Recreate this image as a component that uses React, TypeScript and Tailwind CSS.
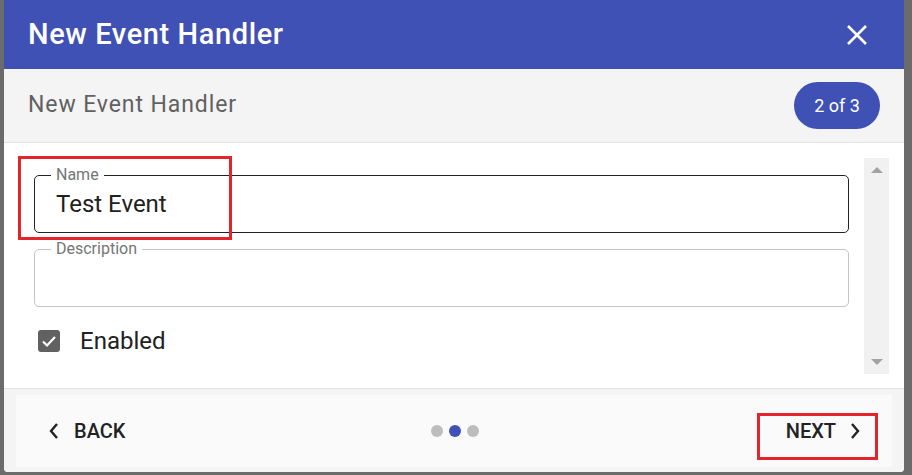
import React from "react";

const ChevronLeft = () => (
  <svg width="12" height="18" viewBox="0 0 12 18" fill="none">
    <path d="M9 2L3 9l6 7" stroke="#222" strokeWidth="2.4" />
  </svg>
);

const ChevronRight = () => (
  <svg width="12" height="18" viewBox="0 0 12 18" fill="none">
    <path d="M3 2l6 7-6 7" stroke="#222" strokeWidth="2.4" />
  </svg>
);

const OutlinedField: React.FC<{ label: string; value?: string; focused?: boolean }> = ({
  label,
  value,
  focused,
}) => (
  <div
    className={
      "relative h-[58px] rounded-[5px] border " + (focused ? "border-[#222]" : "border-[#c4c4c4]")
    }
  >
    <span className="absolute left-[16px] -top-[11px] px-[5px] bg-white text-[16px] leading-[20px] text-[#757575]">
      {label}
    </span>
    {value && (
      <div className="pl-[21px] pt-[13px] text-[24px] leading-[30px] text-[#212121]">{value}</div>
    )}
  </div>
);

const App: React.FC = () => {
  return (
    <div
      className="w-[912px] h-[475px] bg-[#6b6b6b] pl-[4px] pr-[8px] pb-[3px] overflow-hidden"
      style={{ fontFamily: "Roboto, 'Liberation Sans', sans-serif" }}
    >
      <div className="relative h-full flex flex-col bg-white rounded-b-[4px] overflow-hidden">
        {/* title bar */}
        <div className="h-[69px] shrink-0 bg-[#3f51b5] flex items-center justify-between pl-[24px] pr-[36px]">
          <h1 className="text-white text-[29px] font-medium tracking-[0.6px]">New Event Handler</h1>
          <svg width="22" height="22" viewBox="0 0 22 22">
            <path d="M2 2l18 18M20 2L2 20" stroke="white" strokeWidth="2.6" />
          </svg>
        </div>

        {/* step header */}
        <div className="h-[74px] shrink-0 bg-[#f4f4f4] border-b border-[#e2e2e2] flex items-center justify-between pl-[24px] pr-[24px]">
          <span className="text-[#616161] text-[23px] tracking-[0.9px]">New Event Handler</span>
          <span className="h-[47px] w-[86px] rounded-full bg-[#3f51b5] text-white text-[18px] flex items-center justify-center">
            2 of 3
          </span>
        </div>

        {/* form body */}
        <div className="h-[246px] shrink-0 flex pt-[15px] pl-[30px] pr-[15px] border-b border-[#e2e2e2]">
          <div className="flex-1 flex flex-col pt-[17px] pr-[15px]">
            <OutlinedField label="Name" value="Test Event" focused />
            <div className="mt-[16px]">
              <OutlinedField label="Description" />
            </div>
            <div className="flex items-center mt-[16px] pl-[4px]">
              <span className="w-[22px] h-[22px] rounded-[3px] bg-[#616161] flex items-center justify-center">
                <svg width="18" height="18" viewBox="0 0 18 18" fill="none">
                  <path d="M3 9.5l4 4 8-8.5" stroke="white" strokeWidth="2.2" />
                </svg>
              </span>
              <span className="ml-[20px] text-[24px] text-[#212121]">Enabled</span>
            </div>
          </div>
          <div className="w-[25px] h-[216px] bg-[#f1f1f1] flex flex-col items-center justify-between py-[8px]">
            <svg width="12" height="8" viewBox="0 0 12 8">
              <path d="M0 7L6 1l6 6z" fill="#a3a3a3" />
            </svg>
            <svg width="12" height="8" viewBox="0 0 12 8">
              <path d="M0 1l6 6 6-6z" fill="#a3a3a3" />
            </svg>
          </div>
        </div>

        {/* footer */}
        <div className="flex-1 bg-[#f4f4f4] px-[12px] pt-[6px] pb-[5px]">
          <div className="h-full bg-[#fafafa] grid grid-cols-3 items-center pl-[32px] pr-[31px]">
            <div className="flex items-center gap-[14px] text-[20px] font-medium text-[#222]">
              <ChevronLeft />
              <span>BACK</span>
            </div>
            <div className="flex items-center justify-center gap-[6px]">
              <span className="w-[12px] h-[12px] rounded-full bg-[#bdbdbd]" />
              <span className="w-[12px] h-[12px] rounded-full bg-[#3f51b5]" />
              <span className="w-[12px] h-[12px] rounded-full bg-[#bdbdbd]" />
            </div>
            <div className="flex items-center justify-end gap-[13px] text-[20px] font-medium text-[#222]">
              <span>NEXT</span>
              <ChevronRight />
            </div>
          </div>
        </div>

        {/* annotation boxes */}
        <div className="absolute left-[14px] top-[156px] w-[214px] h-[84px] border-[3px] border-[#e3242b]" />
        <div className="absolute left-[753px] top-[413px] w-[121px] h-[47px] border-[3px] border-[#e3242b]" />
      </div>
    </div>
  );
};

export default App;
